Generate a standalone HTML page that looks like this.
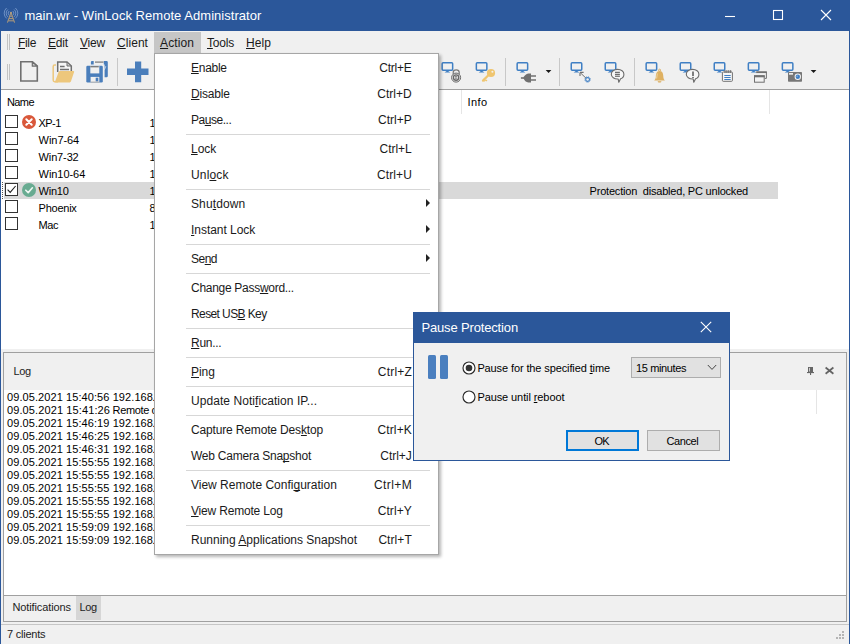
<!DOCTYPE html>
<html><head><meta charset="utf-8"><title>WinLock Remote Administrator</title>
<style>
html,body{margin:0;padding:0}
body{width:850px;height:644px;position:relative;overflow:hidden;background:#f0f0f0;font-family:"Liberation Sans",sans-serif}
.t{position:absolute;white-space:pre;line-height:normal}
.t u{text-decoration:underline;text-underline-offset:1px;text-decoration-thickness:1px;text-decoration-skip-ink:none}
svg{position:absolute;overflow:visible}
.layer{position:absolute;left:0;top:0;width:850px;height:644px}
</style></head><body>
<div class="layer">
<div style="position:absolute;left:0px;top:0px;width:850px;height:31px;background:#2b579a;"></div>
<svg style="left:0;top:0" width="24" height="31" viewBox="0 0 24 31">
<path d="M9.20 15.34 A2.8 2.8 0 0 1 9.20 11.06 M12.80 11.06 A2.8 2.8 0 0 1 12.80 15.34 M7.91 16.88 A4.8 4.8 0 0 1 7.91 9.52 M14.09 9.52 A4.8 4.8 0 0 1 14.09 16.88 M6.63 18.41 A6.8 6.8 0 0 1 6.63 7.99 M15.37 7.99 A6.8 6.8 0 0 1 15.37 18.41 " fill="none" stroke="#7fa0cf" stroke-width="0.8"/>
<g fill="none" stroke="#a8967c" stroke-width="1.1">
<path d="M11 12.6 L7.4 22.6"/><path d="M11 12.6 L14.6 22.6"/><path d="M9.7 16.2 H12.3"/><path d="M9 18.6 H13"/><path d="M8.2 20.8 H13.8"/>
</g><circle cx="11" cy="12.9" r="1.1" fill="#b09c80"/></svg>
<svg style="left:720px;top:5px" width="120" height="22" viewBox="0 0 120 22">
<g stroke="#fff" stroke-width="1.1" fill="none">
<path d="M5 11.5 H15"/>
<rect x="53.5" y="5.5" width="9" height="9"/>
<path d="M101 5 L111 15 M111 5 L101 15"/>
</g></svg>
<div style="position:absolute;left:0px;top:31px;width:1px;height:613px;background:#2b579a;"></div>
<div style="position:absolute;left:849px;top:31px;width:1px;height:613px;background:#2b579a;"></div>
<div style="position:absolute;left:154px;top:32px;width:47px;height:22px;background:#c6c6c6;"></div>
<div style="position:absolute;left:7px;top:34px;width:1px;height:16px;background:#c3c3c3;"></div>
<div style="position:absolute;left:9px;top:34px;width:1px;height:16px;background:#c3c3c3;"></div>
<div style="position:absolute;left:7px;top:64px;width:1px;height:16px;background:#c3c3c3;"></div>
<div style="position:absolute;left:9px;top:64px;width:1px;height:16px;background:#c3c3c3;"></div>
<div style="position:absolute;left:1px;top:89px;width:848px;height:1px;background:#a0a0a0;"></div>
<div style="position:absolute;left:117px;top:58px;width:1px;height:28px;background:#c8c8c8;"></div>
<div style="position:absolute;left:505px;top:58px;width:1px;height:28px;background:#c8c8c8;"></div>
<div style="position:absolute;left:559px;top:58px;width:1px;height:28px;background:#c8c8c8;"></div>
<div style="position:absolute;left:634px;top:58px;width:1px;height:28px;background:#c8c8c8;"></div>
<svg style="left:0;top:54px" width="850" height="36" viewBox="0 54 850 36"><path d="M20.8 61.7 H32.3 L37.3 66.2 V81 H20.8 Z" fill="none" stroke="#707070" stroke-width="1.6"/><path d="M32.3 61.7 V66.2 H37.3 Z" fill="#cfcfcf" stroke="#707070" stroke-width="1.2" stroke-linejoin="round"/><path d="M56 65.1 H54.6 Q53.2 65.1 53.2 66.5 V80.3 Q53.2 81.7 54.6 81.7 H58" fill="none" stroke="#edc77c" stroke-width="1.5"/><path d="M57.7 72 V62.1 H67 L71.3 66 V71.5" fill="#f6f6f6" stroke="#707070" stroke-width="1.5"/><path d="M67 62.1 V66 H71.3 Z" fill="#c9c9c9" stroke="#707070" stroke-width="1" stroke-linejoin="round"/><path d="M60 66.5 H64.6 M60 69.5 H69" stroke="#707070" stroke-width="1.3"/><path d="M60 71 H73.4 Q74.5 71 74.1 72 L70.9 81.6 Q70.6 82.4 69.7 82.4 H55.8 Q54.7 82.4 55.1 81.4 L58.6 71.9 Q59 71 60 71 Z" fill="#edc77c"/><path d="M92 61 H106.6 Q107.8 61 107.8 62.2 V76.1 Q107.8 77.3 106.6 77.3 H104.6 V64.6 H90.9 V62.2 Q90.9 61 92 61 Z" fill="#4a7ebb"/><path d="M93.7 61 H103.8 V65.6 H93.7 Z" fill="#f0f0f0"/><path d="M95 62.1 H103.5" stroke="#777" stroke-width="1.2"/><path d="M104.4 69.8 L105.8 66.2" stroke="#dfe7f1" stroke-width="0.8"/><path d="M87.5 65.7 H101.6 Q102.8 65.7 102.8 66.9 V81.3 Q102.8 82.5 101.6 82.5 H87.5 Q86.3 82.5 86.3 81.3 V66.9 Q86.3 65.7 87.5 65.7 Z" fill="#4a7ebb"/><path d="M90.3 65.7 H99.3 V73.4 H90.3 Z" fill="#f0f0f0"/><path d="M90.3 66.7 H98.8" stroke="#777" stroke-width="1.3"/><path d="M90.6 76.9 H99.3 V82.5 H90.6 Z" fill="#f0f0f0"/><path d="M95.7 77.7 H98.3 V81.4 H95.7 Z" fill="#4a7ebb"/><path d="M90.6 82.1 H99.3" stroke="#999" stroke-width="0.8"/><path d="M135 61.4 H141.2 V68.6 H148.5 V75.1 H141.2 V82.3 H135 V75.1 H127 V68.6 H135 Z" fill="#4a7ebb"/><rect x="442.15" y="62.85" width="10.5" height="7.4" rx="0.9" fill="none" stroke="#3f7fc4" stroke-width="1.5"/><path d="M446.60 71 H448.20 L450.30 72.6 H444.50 Z" fill="#3f7fc4"/><rect x="476.35" y="62.85" width="10.5" height="7.4" rx="0.9" fill="none" stroke="#3f7fc4" stroke-width="1.5"/><path d="M480.80 71 H482.40 L484.50 72.6 H478.70 Z" fill="#3f7fc4"/><rect x="517.15" y="62.85" width="10.5" height="7.4" rx="0.9" fill="none" stroke="#3f7fc4" stroke-width="1.5"/><path d="M521.60 71 H523.20 L525.30 72.6 H519.50 Z" fill="#3f7fc4"/><rect x="571.25" y="62.85" width="10.5" height="7.4" rx="0.9" fill="none" stroke="#3f7fc4" stroke-width="1.5"/><path d="M575.70 71 H577.30 L579.40 72.6 H573.60 Z" fill="#3f7fc4"/><rect x="605.25" y="62.85" width="10.5" height="7.4" rx="0.9" fill="none" stroke="#3f7fc4" stroke-width="1.5"/><path d="M609.70 71 H611.30 L613.40 72.6 H607.60 Z" fill="#3f7fc4"/><rect x="646.15" y="62.85" width="10.5" height="7.4" rx="0.9" fill="none" stroke="#3f7fc4" stroke-width="1.5"/><path d="M650.60 71 H652.20 L654.30 72.6 H648.50 Z" fill="#3f7fc4"/><rect x="680.25" y="62.85" width="10.5" height="7.4" rx="0.9" fill="none" stroke="#3f7fc4" stroke-width="1.5"/><path d="M684.70 71 H686.30 L688.40 72.6 H682.60 Z" fill="#3f7fc4"/><rect x="714.25" y="62.85" width="10.5" height="7.4" rx="0.9" fill="none" stroke="#3f7fc4" stroke-width="1.5"/><path d="M718.70 71 H720.30 L722.40 72.6 H716.60 Z" fill="#3f7fc4"/><rect x="748.35" y="62.85" width="10.5" height="7.4" rx="0.9" fill="none" stroke="#3f7fc4" stroke-width="1.5"/><path d="M752.80 71 H754.40 L756.50 72.6 H750.70 Z" fill="#3f7fc4"/><rect x="782.35" y="62.85" width="10.5" height="7.4" rx="0.9" fill="none" stroke="#3f7fc4" stroke-width="1.5"/><path d="M786.80 71 H788.40 L790.50 72.6 H784.70 Z" fill="#3f7fc4"/><path d="M453.2 74.6 V72.6 Q453.2 69.9 456.2 69.9 Q459.2 69.9 459.2 72.6 V74.6" fill="none" stroke="#777" stroke-width="1.2"/><circle cx="456.1" cy="77.6" r="4.5" fill="#ededed" stroke="#666" stroke-width="1"/><circle cx="456.1" cy="77.6" r="2.7" fill="#e4e4e4" stroke="#666" stroke-width="1.3"/><rect x="455.4" y="76.2" width="1.4" height="2.8" fill="#fafafa" stroke="#666" stroke-width="0.5"/><path d="M483 80.6 L488.6 75" stroke="#efc56f" stroke-width="2.2" stroke-linecap="round"/><path d="M484.2 81.3 L485.6 79.9 M486 81 L487 80" stroke="#efc56f" stroke-width="1.1"/><circle cx="491" cy="73" r="4.1" fill="#efc56f"/><circle cx="492.4" cy="71.7" r="1.05" fill="#f3f0ea"/><path d="M520.9 78 H524.5" stroke="#707070" stroke-width="1.6"/><path d="M523.4 78 Q524.8 74 528.4 73.4 H531 V82.5 H528.4 Q524.8 82 523.4 78 Z" fill="#707070"/><path d="M531 76 H536 M531 80 H536" stroke="#707070" stroke-width="1.5"/><path d="M545.7 70 H551.4 L548.55 73.1 Z" fill="#1a1a1a"/><path d="M810.7 70 H816.4 L813.55 73.1 Z" fill="#1a1a1a"/><path d="M580.4 72.8 L586 78.2" stroke="#707070" stroke-width="1"/><path d="M580 72.4 H583.6 M580 72.4 V76" stroke="#707070" stroke-width="1.1"/><circle cx="587.6" cy="79.5" r="1.9" fill="none" stroke="#3f7fc4" stroke-width="1.1"/><circle cx="587.6" cy="79.5" r="2.7" fill="none" stroke="#3f7fc4" stroke-width="0.9" stroke-dasharray="1.1 1.02"/><path d="M617.60 69.4 C621.20 69.4 623.90 71.5 623.90 74.2 C623.90 76.4 622.20 78.2 620.60 78.7 L618.80 82.3 L618.20 79 C614.20 79.2 611.30 77 611.30 74.2 C611.30 71.5 614.00 69.4 617.60 69.4 Z" fill="#f7f7f7" stroke="#6c6c6c" stroke-width="1.1" stroke-linejoin="round"/><path d="M615 72.3 H619.9 M615 74.3 H619.9 M615 76.2 H619.9" stroke="#3a3a3a" stroke-width="0.9"/><circle cx="659.6" cy="70.2" r="1" fill="none" stroke="#dcab5a" stroke-width="0.9"/><path d="M659.6 71.1 C663 71.1 663.2 74.5 663.4 77.2 C663.5 78.8 664.2 79.8 665 80.6 H654.1 C654.9 79.8 655.6 78.8 655.8 77.2 C656 74.5 656.2 71.1 659.6 71.1 Z" fill="#dfb162"/><path d="M657.3 73.5 Q657 76 656.6 78.5" stroke="#f1d7a6" stroke-width="0.9" fill="none"/><path d="M657.8 81.3 H661.3 V81.9 Q659.5 83.2 657.8 81.9 Z" fill="#d9a856"/><path d="M692.60 69.4 C696.20 69.4 698.90 71.5 698.90 74.2 C698.90 76.4 697.20 78.2 695.60 78.7 L693.80 82.3 L693.20 79 C689.20 79.2 686.30 77 686.30 74.2 C686.30 71.5 689.00 69.4 692.60 69.4 Z" fill="#f7f7f7" stroke="#6c6c6c" stroke-width="1.1" stroke-linejoin="round"/><path d="M693 71.4 V76" stroke="#4a4a4a" stroke-width="1.4"/><rect x="692.3" y="76.9" width="1.4" height="1.3" fill="#4a4a4a"/><rect x="722.4" y="72" width="10" height="9.3" rx="0.8" fill="#f6f6f6" stroke="#707070" stroke-width="1"/><path d="M725 70 V73 M726.9 70 V73 M728.8 70 V73 M730.7 70 V73" stroke="#555" stroke-width="0.8"/><path d="M724.3 75.5 H730.7 M724.3 77.5 H730.7 M724.3 79.5 H730.7" stroke="#3f7fc4" stroke-width="1"/><path d="M756.7 72.2 H766.4 V78.4 H764.8" fill="none" stroke="#707070" stroke-width="1"/><path d="M756.2 72.2 H766.9" stroke="#707070" stroke-width="1.7"/><rect x="754.5" y="75.8" width="9.7" height="6.4" fill="#f3f3f3" stroke="#707070" stroke-width="1"/><path d="M754 76.3 H764.7" stroke="#707070" stroke-width="2"/><rect x="788" y="72" width="14" height="9.7" rx="0.7" fill="#777"/><rect x="789" y="73" width="4" height="1.7" fill="#ececec"/><circle cx="797.8" cy="76.8" r="3.2" fill="#f3f3f3"/><circle cx="797.8" cy="76.8" r="2.2" fill="#3f7fc4"/><circle cx="797.1" cy="76.1" r="0.7" fill="#a9c6e6"/></svg>
<div style="position:absolute;left:1px;top:90px;width:848px;height:259px;background:#fff;"></div>
<div style="position:absolute;left:461px;top:90px;width:1px;height:24px;background:#e5e5e5;"></div>
<div style="position:absolute;left:769px;top:90px;width:1px;height:24px;background:#e5e5e5;"></div>
<div style="position:absolute;left:4px;top:182px;width:774px;height:17px;background:#d9d9d9;"></div>
<div style="position:absolute;left:5px;top:115px;width:13px;height:13px;background:#fff;box-sizing:border-box;border:1px solid #333"></div>
<div style="position:absolute;left:5px;top:132px;width:13px;height:13px;background:#fff;box-sizing:border-box;border:1px solid #333"></div>
<div style="position:absolute;left:5px;top:149px;width:13px;height:13px;background:#fff;box-sizing:border-box;border:1px solid #333"></div>
<div style="position:absolute;left:5px;top:166px;width:13px;height:13px;background:#fff;box-sizing:border-box;border:1px solid #333"></div>
<div style="position:absolute;left:5px;top:183px;width:13px;height:13px;background:#fff;box-sizing:border-box;border:1px solid #333"></div>
<div style="position:absolute;left:5px;top:200px;width:13px;height:13px;background:#fff;box-sizing:border-box;border:1px solid #333"></div>
<div style="position:absolute;left:5px;top:217px;width:13px;height:13px;background:#fff;box-sizing:border-box;border:1px solid #333"></div>
<div style="position:absolute;left:2px;top:182px;width:1px;height:17px;background:transparent;border-left:1px dotted #555"></div>
<svg style="left:5px;top:183px" width="13" height="13" viewBox="0 0 13 13"><path d="M2.6 6.6 L5.2 9.4 L10.6 3" fill="none" stroke="#222" stroke-width="1.1"/></svg>
<svg style="left:22px;top:115px" width="14" height="14" viewBox="0 0 14 14"><circle cx="7" cy="7" r="7" fill="#d9583a"/>
<path d="M4.3 4.3 L9.7 9.7 M9.7 4.3 L4.3 9.7" stroke="#fff" stroke-width="2" stroke-linecap="round"/></svg>
<svg style="left:22px;top:183px" width="14" height="14" viewBox="0 0 14 14"><circle cx="7" cy="7" r="7" fill="#68ab91"/>
<path d="M3.8 7.2 L6.2 9.6 L10.4 4.8" fill="none" stroke="#eef6f2" stroke-width="1.6" stroke-linecap="round" stroke-linejoin="round"/></svg>
<div style="position:absolute;left:3px;top:352px;width:844px;height:270px;background:#a0a0a0;"></div>
<div style="position:absolute;left:4px;top:353px;width:842px;height:37px;background:#f0f0f0;"></div>
<div style="position:absolute;left:4px;top:390px;width:842px;height:205px;background:#fff;"></div>
<div style="position:absolute;left:4px;top:596px;width:842px;height:25px;background:#f0f0f0;"></div>
<div style="position:absolute;left:816px;top:390px;width:1px;height:24px;background:#e5e5e5;"></div>
<svg style="left:800px;top:360px" width="40" height="20" viewBox="800 360 40 20"><rect x="808" y="367" width="5" height="5.2" fill="#666"/><rect x="809.1" y="367.9" width="0.9" height="3.6" fill="#d8d8d8"/><rect x="807" y="372" width="7" height="1.1" fill="#666"/><rect x="810" y="373" width="1.1" height="2" fill="#666"/>
<path d="M825.6 367.5 L833.4 373.7 M833.4 367.5 L825.6 373.7" stroke="#646464" stroke-width="1.75"/></svg>
<div style="position:absolute;left:76px;top:596px;width:25px;height:24px;background:#d6d6d6;"></div>
<div style="position:absolute;left:1px;top:624px;width:848px;height:1px;background:#c6c6c6;"></div>
<div style="position:absolute;left:842px;top:637px;width:2px;height:2px;background:#b4b4b4;"></div>
<div style="position:absolute;left:839px;top:637px;width:2px;height:2px;background:#b4b4b4;"></div>
<div style="position:absolute;left:842px;top:634px;width:2px;height:2px;background:#b4b4b4;"></div>
<div style="position:absolute;left:836px;top:637px;width:2px;height:2px;background:#b4b4b4;"></div>
<div style="position:absolute;left:839px;top:634px;width:2px;height:2px;background:#b4b4b4;"></div>
<div style="position:absolute;left:842px;top:631px;width:2px;height:2px;background:#b4b4b4;"></div>
<div class="t" style="left:24.40px;top:8px;font-size:13px;color:#fff;letter-spacing:0.039px">main.wr - WinLock Remote Administrator</div>
<div class="t" style="left:18.00px;top:36px;font-size:12px;color:#1a1a1a;letter-spacing:-0.336px"><u>F</u>ile</div>
<div class="t" style="left:48.00px;top:36px;font-size:12px;color:#1a1a1a;letter-spacing:-0.172px"><u>E</u>dit</div>
<div class="t" style="left:80.00px;top:36px;font-size:12px;color:#1a1a1a;letter-spacing:-0.199px"><u>V</u>iew</div>
<div class="t" style="left:117.00px;top:36px;font-size:12px;color:#1a1a1a;letter-spacing:0.052px"><u>C</u>lient</div>
<div class="t" style="left:160.00px;top:36px;font-size:12px;color:#1a1a1a;letter-spacing:0.107px"><u>A</u>ction</div>
<div class="t" style="left:207.00px;top:36px;font-size:12px;color:#1a1a1a;letter-spacing:-0.203px"><u>T</u>ools</div>
<div class="t" style="left:246.00px;top:36px;font-size:12px;color:#1a1a1a;letter-spacing:0.078px"><u>H</u>elp</div>
<div class="t" style="left:7.00px;top:96px;font-size:11px;color:#000;letter-spacing:-0.600px">Name</div>
<div class="t" style="left:467.50px;top:96px;font-size:11px;color:#000;letter-spacing:0.410px">Info</div>
<div class="t" style="left:38.60px;top:117px;font-size:11px;color:#000;letter-spacing:-0.600px">XP-1</div>
<div class="t" style="left:149.60px;top:117px;font-size:11px;color:#000;letter-spacing:0.000px">1</div>
<div class="t" style="left:38.60px;top:134px;font-size:11px;color:#000;letter-spacing:-0.053px">Win7-64</div>
<div class="t" style="left:149.60px;top:134px;font-size:11px;color:#000;letter-spacing:0.000px">1</div>
<div class="t" style="left:38.60px;top:151px;font-size:11px;color:#000;letter-spacing:-0.138px">Win7-32</div>
<div class="t" style="left:149.60px;top:151px;font-size:11px;color:#000;letter-spacing:0.000px">1</div>
<div class="t" style="left:38.60px;top:168px;font-size:11px;color:#000;letter-spacing:-0.060px">Win10-64</div>
<div class="t" style="left:149.60px;top:168px;font-size:11px;color:#000;letter-spacing:0.000px">1</div>
<div class="t" style="left:38.60px;top:185px;font-size:11px;color:#000;letter-spacing:-0.237px">Win10</div>
<div class="t" style="left:149.60px;top:185px;font-size:11px;color:#000;letter-spacing:0.000px">1</div>
<div class="t" style="left:38.60px;top:202px;font-size:11px;color:#000;letter-spacing:-0.252px">Phoenix</div>
<div class="t" style="left:149.60px;top:202px;font-size:11px;color:#000;letter-spacing:0.000px">8</div>
<div class="t" style="left:38.60px;top:219px;font-size:11px;color:#000;letter-spacing:-0.394px">Mac</div>
<div class="t" style="left:149.60px;top:219px;font-size:11px;color:#000;letter-spacing:0.000px">1</div>
<div class="t" style="left:589.60px;top:185px;font-size:11px;color:#000;letter-spacing:-0.203px">Protection  disabled, PC unlocked</div>
<div class="t" style="left:13.60px;top:365px;font-size:11px;color:#222;letter-spacing:-0.453px">Log</div>
<div class="t" style="left:7.00px;top:391px;font-size:11px;color:#000;letter-spacing:0.083px">09.05.2021 15:40:56 192.168</div>
<div class="t" style="left:152.30px;top:391px;font-size:11px;color:#000;letter-spacing:0.000px">.1.</div>
<div class="t" style="left:7.00px;top:404px;font-size:11px;color:#000;letter-spacing:0.109px">09.05.2021 15:41:26</div>
<div class="t" style="left:112.60px;top:404px;font-size:11px;color:#000;letter-spacing:-0.355px">Remote</div>
<div class="t" style="left:151.50px;top:404px;font-size:11px;color:#000;letter-spacing:0.000px">connection</div>
<div class="t" style="left:7.00px;top:417px;font-size:11px;color:#000;letter-spacing:0.083px">09.05.2021 15:46:19 192.168</div>
<div class="t" style="left:152.30px;top:417px;font-size:11px;color:#000;letter-spacing:0.000px">.1.</div>
<div class="t" style="left:7.00px;top:430px;font-size:11px;color:#000;letter-spacing:0.083px">09.05.2021 15:46:25 192.168</div>
<div class="t" style="left:152.30px;top:430px;font-size:11px;color:#000;letter-spacing:0.000px">.1.</div>
<div class="t" style="left:7.00px;top:443px;font-size:11px;color:#000;letter-spacing:0.083px">09.05.2021 15:46:31 192.168</div>
<div class="t" style="left:152.30px;top:443px;font-size:11px;color:#000;letter-spacing:0.000px">.1.</div>
<div class="t" style="left:7.00px;top:456px;font-size:11px;color:#000;letter-spacing:0.083px">09.05.2021 15:55:55 192.168</div>
<div class="t" style="left:152.30px;top:456px;font-size:11px;color:#000;letter-spacing:0.000px">.1.</div>
<div class="t" style="left:7.00px;top:469px;font-size:11px;color:#000;letter-spacing:0.083px">09.05.2021 15:55:55 192.168</div>
<div class="t" style="left:152.30px;top:469px;font-size:11px;color:#000;letter-spacing:0.000px">.1.</div>
<div class="t" style="left:7.00px;top:482px;font-size:11px;color:#000;letter-spacing:0.083px">09.05.2021 15:55:55 192.168</div>
<div class="t" style="left:152.30px;top:482px;font-size:11px;color:#000;letter-spacing:0.000px">.1.</div>
<div class="t" style="left:7.00px;top:495px;font-size:11px;color:#000;letter-spacing:0.083px">09.05.2021 15:55:55 192.168</div>
<div class="t" style="left:152.30px;top:495px;font-size:11px;color:#000;letter-spacing:0.000px">.1.</div>
<div class="t" style="left:7.00px;top:508px;font-size:11px;color:#000;letter-spacing:0.083px">09.05.2021 15:55:55 192.168</div>
<div class="t" style="left:152.30px;top:508px;font-size:11px;color:#000;letter-spacing:0.000px">.1.</div>
<div class="t" style="left:7.00px;top:521px;font-size:11px;color:#000;letter-spacing:0.083px">09.05.2021 15:59:09 192.168</div>
<div class="t" style="left:152.30px;top:521px;font-size:11px;color:#000;letter-spacing:0.000px">.1.</div>
<div class="t" style="left:7.00px;top:534px;font-size:11px;color:#000;letter-spacing:0.083px">09.05.2021 15:59:09 192.168</div>
<div class="t" style="left:152.30px;top:534px;font-size:11px;color:#000;letter-spacing:0.000px">.1.</div>
<div class="t" style="left:12.40px;top:601px;font-size:11px;color:#222;letter-spacing:-0.102px">Notifications</div>
<div class="t" style="left:79.60px;top:601px;font-size:11px;color:#222;letter-spacing:-0.453px">Log</div>
<div class="t" style="left:7.00px;top:628px;font-size:11px;color:#222;letter-spacing:-0.218px">7 clients</div>
</div>
<div class="layer">
<div style="position:absolute;left:154px;top:53px;width:285px;height:502px;background:#fff;box-sizing:border-box;border:1px solid #a6a6a6;box-shadow:2px 2px 3px rgba(0,0,0,0.29)"></div>
<div style="position:absolute;left:186px;top:134px;width:244px;height:1px;background:#d7d7d7;"></div>
<div style="position:absolute;left:186px;top:189px;width:244px;height:1px;background:#d7d7d7;"></div>
<svg style="left:426px;top:199.4px" width="4" height="8" viewBox="0 0 4 8"><path d="M0 0 L4 4 L0 8 Z" fill="#222"/></svg>
<svg style="left:426px;top:225.4px" width="4" height="8" viewBox="0 0 4 8"><path d="M0 0 L4 4 L0 8 Z" fill="#222"/></svg>
<div style="position:absolute;left:186px;top:244px;width:244px;height:1px;background:#d7d7d7;"></div>
<svg style="left:426px;top:254.4px" width="4" height="8" viewBox="0 0 4 8"><path d="M0 0 L4 4 L0 8 Z" fill="#222"/></svg>
<div style="position:absolute;left:186px;top:273px;width:244px;height:1px;background:#d7d7d7;"></div>
<div style="position:absolute;left:186px;top:328px;width:244px;height:1px;background:#d7d7d7;"></div>
<div style="position:absolute;left:186px;top:357px;width:244px;height:1px;background:#d7d7d7;"></div>
<div style="position:absolute;left:186px;top:386px;width:244px;height:1px;background:#d7d7d7;"></div>
<div style="position:absolute;left:186px;top:415px;width:244px;height:1px;background:#d7d7d7;"></div>
<div style="position:absolute;left:186px;top:470px;width:244px;height:1px;background:#d7d7d7;"></div>
<div style="position:absolute;left:186px;top:525px;width:244px;height:1px;background:#d7d7d7;"></div>
<div class="t" style="left:191.00px;top:61px;font-size:12px;color:#1a1a1a;letter-spacing:-0.279px"><u>E</u>nable</div>
<div class="t" style="left:379.27px;top:61px;font-size:12px;color:#1a1a1a;letter-spacing:-0.231px">Ctrl+E</div>
<div class="t" style="left:191.00px;top:87px;font-size:12px;color:#1a1a1a;letter-spacing:-0.176px"><u>D</u>isable</div>
<div class="t" style="left:377.24px;top:87px;font-size:12px;color:#1a1a1a;letter-spacing:0.043px">Ctrl+D</div>
<div class="t" style="left:191.00px;top:113px;font-size:12px;color:#1a1a1a;letter-spacing:-0.466px">Pa<u>u</u>se...</div>
<div class="t" style="left:378.02px;top:113px;font-size:12px;color:#1a1a1a;letter-spacing:0.019px">Ctrl+P</div>
<div class="t" style="left:191.00px;top:142px;font-size:12px;color:#1a1a1a;letter-spacing:-0.015px"><u>L</u>ock</div>
<div class="t" style="left:379.49px;top:142px;font-size:12px;color:#1a1a1a;letter-spacing:-0.007px">Ctrl+L</div>
<div class="t" style="left:191.00px;top:168px;font-size:12px;color:#1a1a1a;letter-spacing:0.169px">Unl<u>o</u>ck</div>
<div class="t" style="left:377.08px;top:168px;font-size:12px;color:#1a1a1a;letter-spacing:0.076px">Ctrl+U</div>
<div class="t" style="left:191.00px;top:197px;font-size:12px;color:#1a1a1a;letter-spacing:0.116px">Shu<u>t</u>down</div>
<div class="t" style="left:191.00px;top:223px;font-size:12px;color:#1a1a1a;letter-spacing:-0.035px"><u>I</u>nstant Lock</div>
<div class="t" style="left:191.00px;top:252px;font-size:12px;color:#1a1a1a;letter-spacing:-0.508px">Se<u>n</u>d</div>
<div class="t" style="left:191.00px;top:281px;font-size:12px;color:#1a1a1a;letter-spacing:-0.287px">Change Pass<u>w</u>ord...</div>
<div class="t" style="left:191.00px;top:307px;font-size:12px;color:#1a1a1a;letter-spacing:-0.600px">Reset US<u>B</u> Key</div>
<div class="t" style="left:191.00px;top:336px;font-size:12px;color:#1a1a1a;letter-spacing:-0.286px"><u>R</u>un...</div>
<div class="t" style="left:191.00px;top:365px;font-size:12px;color:#1a1a1a;letter-spacing:-0.033px"><u>P</u>ing</div>
<div class="t" style="left:377.80px;top:365px;font-size:12px;color:#1a1a1a;letter-spacing:0.200px">Ctrl+Z</div>
<div class="t" style="left:191.00px;top:394px;font-size:12px;color:#1a1a1a;letter-spacing:0.059px">Update Noti<u>f</u>ication IP...</div>
<div class="t" style="left:191.00px;top:423px;font-size:12px;color:#1a1a1a;letter-spacing:-0.155px">Capture Remote Des<u>k</u>top</div>
<div class="t" style="left:377.52px;top:423px;font-size:12px;color:#1a1a1a;letter-spacing:0.119px">Ctrl+K</div>
<div class="t" style="left:191.00px;top:449px;font-size:12px;color:#1a1a1a;letter-spacing:-0.238px">Web Camera Sna<u>p</u>shot</div>
<div class="t" style="left:380.35px;top:449px;font-size:12px;color:#1a1a1a;letter-spacing:-0.045px">Ctrl+J</div>
<div class="t" style="left:191.00px;top:478px;font-size:12px;color:#1a1a1a;letter-spacing:-0.002px">View Remote Confi<u>g</u>uration</div>
<div class="t" style="left:374.02px;top:478px;font-size:12px;color:#1a1a1a;letter-spacing:0.421px">Ctrl+M</div>
<div class="t" style="left:191.00px;top:504px;font-size:12px;color:#1a1a1a;letter-spacing:-0.187px"><u>V</u>iew Remote Log</div>
<div class="t" style="left:377.69px;top:504px;font-size:12px;color:#1a1a1a;letter-spacing:0.085px">Ctrl+Y</div>
<div class="t" style="left:191.00px;top:533px;font-size:12px;color:#1a1a1a;letter-spacing:-0.004px">Running <u>A</u>pplications Snapshot</div>
<div class="t" style="left:378.38px;top:533px;font-size:12px;color:#1a1a1a;letter-spacing:0.083px">Ctrl+T</div>
</div>
<div class="layer">
<div style="position:absolute;left:413px;top:312px;width:317px;height:149px;background:#f0f0f0;box-sizing:border-box;border:1px solid #2b579a"></div>
<div style="position:absolute;left:413px;top:312px;width:317px;height:31px;background:#2b579a;"></div>
<svg style="left:700px;top:321px" width="12" height="12" viewBox="0 0 12 12"><path d="M0.8 0.8 L11.2 11.2 M11.2 0.8 L0.8 11.2" stroke="#fff" stroke-width="1.1"/></svg>
<div style="position:absolute;left:428px;top:355px;width:8px;height:24px;background:#4a7fbf;border-radius:1.5px"></div>
<div style="position:absolute;left:440px;top:355px;width:8px;height:24px;background:#4a7fbf;border-radius:1.5px"></div>
<svg style="left:461.5px;top:360.5px" width="14" height="14" viewBox="0 0 14 14"><circle cx="7" cy="7" r="6" fill="#fff" stroke="#2a2a2a" stroke-width="1.15"/><circle cx="7" cy="7" r="3.3" fill="#333"/></svg>
<svg style="left:461.5px;top:389.5px" width="14" height="14" viewBox="0 0 14 14"><circle cx="7" cy="7" r="6" fill="#fff" stroke="#2a2a2a" stroke-width="1.15"/></svg>
<div style="position:absolute;left:631px;top:357px;width:90px;height:21px;background:#e1e1e1;box-sizing:border-box;border:1px solid #adadad"></div>
<svg style="left:707px;top:364px" width="10" height="7" viewBox="0 0 10 7"><path d="M0.8 1 L5 5.4 L9.2 1" fill="none" stroke="#444" stroke-width="1"/></svg>
<div style="position:absolute;left:566px;top:430px;width:73px;height:21px;background:#e1e1e1;box-sizing:border-box;border:2px solid #0078d7"></div>
<div style="position:absolute;left:647px;top:430px;width:73px;height:21px;background:#e1e1e1;box-sizing:border-box;border:1px solid #adadad"></div>
<div class="t" style="left:421.40px;top:320px;font-size:13px;color:#fff;letter-spacing:-0.151px">Pause Protection</div>
<div class="t" style="left:477.40px;top:362px;font-size:11px;color:#000;letter-spacing:-0.113px">Pause for the specified <u>t</u>ime</div>
<div class="t" style="left:477.40px;top:391px;font-size:11px;color:#000;letter-spacing:-0.093px">Pause until <u>r</u>eboot</div>
<div class="t" style="left:636.00px;top:362px;font-size:11px;color:#000;letter-spacing:-0.381px">15 minutes</div>
<div class="t" style="left:594.40px;top:435px;font-size:11px;color:#000;letter-spacing:-0.600px">OK</div>
<div class="t" style="left:666.40px;top:435px;font-size:11px;color:#000;letter-spacing:-0.375px">Cancel</div>
</div>
</body></html>
